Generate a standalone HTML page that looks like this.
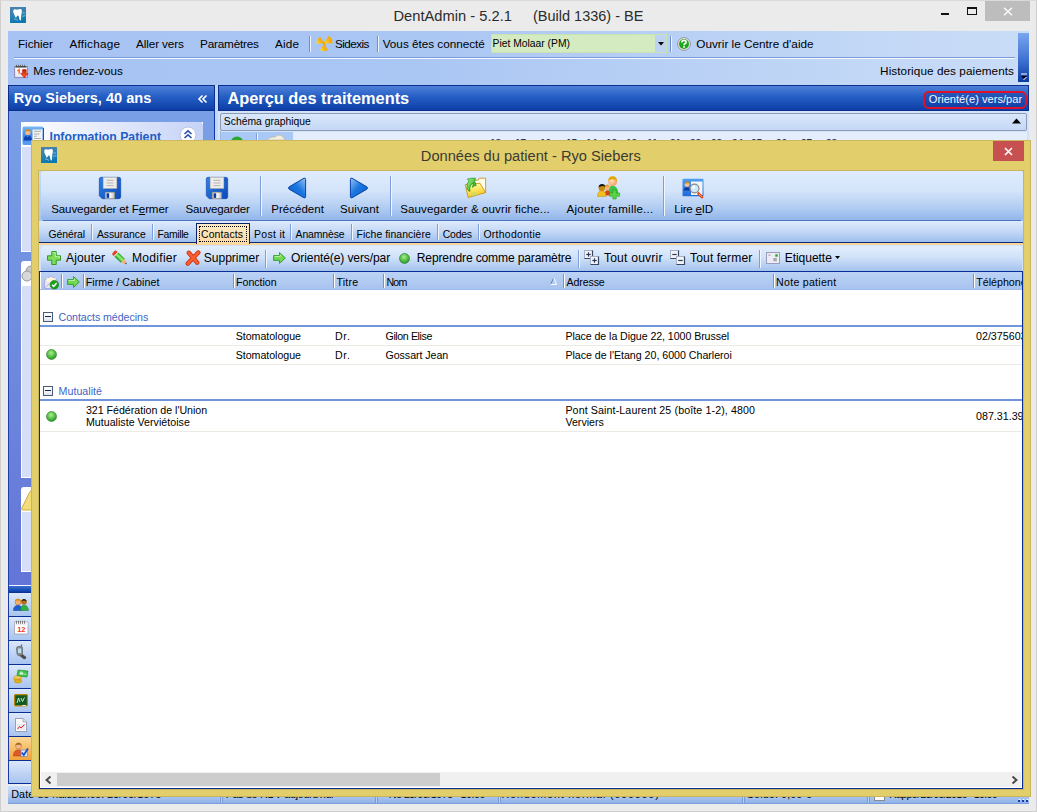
<!DOCTYPE html>
<html><head><meta charset="utf-8">
<style>
*{margin:0;padding:0;box-sizing:border-box}
html,body{width:1037px;height:812px;overflow:hidden}
body{background:#ebebeb;font-family:"Liberation Sans",sans-serif;font-size:12px;color:#000;position:relative}
.a{position:absolute}
.t{position:absolute;white-space:nowrap}
svg{position:absolute;overflow:visible}
</style></head><body>
<div class="a" style="left:0px;top:0px;width:1037px;height:812px;border:1px solid #cfcfcf;border-top-color:#dadada"></div>
<svg style="left:10px;top:7px" width="16" height="16" viewBox="0 0 16 16">
<defs><linearGradient id="tg10" x1="0" y1="0" x2="0.3" y2="1"><stop offset="0" stop-color="#5482ac"/><stop offset="0.6" stop-color="#2a82b4"/><stop offset="1" stop-color="#0c78b0"/></linearGradient></defs>
<rect width="16" height="16" fill="url(#tg10)"/>
<path d="M3.2 3.8 Q3.4 2 5 2.2 Q6.5 2.8 7.6 2.6 Q9 2 10.6 2.1 Q12.2 2.4 11.9 4.2 Q11.6 6.5 11.2 8.2 L11 12.6 Q10.8 13.8 10 13.4 Q9.2 12.4 9 10.2 Q8.8 8.6 7.8 8.6 Q7 8.7 6.6 9.8 Q6.1 11 5.6 10.6 Q5 9.2 4.5 8 Q3.1 6 3.2 3.8Z" fill="#fff"/>
<path d="M12.5 5.5 Q14 6.5 15 6 M12 9 Q13.5 9.5 15.5 8.5 M4 12 Q6 11.8 8 13.5" stroke="#a8d8f0" stroke-width="0.8" fill="none" opacity="0.8"/>
</svg>
<div class="t" style="left:393.50px;top:8.56px;font-size:14.7px;line-height:14.7px;color:#2b2b2b;font-weight:normal;">DentAdmin - 5.2.1</div>
<div class="t" style="left:533.00px;top:8.72px;font-size:14.51px;line-height:14.51px;color:#2b2b2b;font-weight:normal;">(Build 1336) - BE</div>
<div class="a" style="left:941px;top:13px;width:8px;height:2px;background:#111"></div>
<div class="a" style="left:967px;top:7px;width:10px;height:8px;border:1px solid #111;border-top-width:2px"></div>
<div class="a" style="left:985px;top:1px;width:45px;height:20px;background:#bdbdbd"></div>
<svg style="left:1003px;top:7px" width="10" height="9" viewBox="0 0 10 9"><path d="M1 0.8 L9 8.2 M9 0.8 L1 8.2" stroke="#fff" stroke-width="1.3"/></svg>
<div class="a" style="left:8px;top:31px;width:1021px;height:54px;background:linear-gradient(to right,#a6c3f3 0%,#aac6f3 40%,#c3d8f6 85%,#c9dcf7 100%)"></div>
<div class="a" style="left:14px;top:57px;width:1001px;height:1px;background:#7b9cd9"></div>
<div class="a" style="left:14px;top:58px;width:1001px;height:1px;background:#f4f8ff"></div>
<div class="t" style="left:18.00px;top:38.05px;font-size:11.75px;line-height:11.75px;color:#000;font-weight:normal;letter-spacing:-0.058px;">Fichier</div>
<div class="t" style="left:69.40px;top:38.05px;font-size:11.75px;line-height:11.75px;color:#000;font-weight:normal;letter-spacing:0.230px;">Affichage</div>
<div class="t" style="left:136.00px;top:38.05px;font-size:11.75px;line-height:11.75px;color:#000;font-weight:normal;letter-spacing:-0.111px;">Aller vers</div>
<div class="t" style="left:200.00px;top:38.05px;font-size:11.75px;line-height:11.75px;color:#000;font-weight:normal;letter-spacing:-0.194px;">Paramètres</div>
<div class="t" style="left:275.00px;top:38.05px;font-size:11.75px;line-height:11.75px;color:#000;font-weight:normal;letter-spacing:0.167px;">Aide</div>
<div class="a" style="left:309px;top:36px;width:1px;height:16px;background:#6f8fc8;box-shadow:1px 0 0 #eef4ff"></div>
<svg style="left:315px;top:35px" width="17" height="17" viewBox="0 0 17 17">
<defs><linearGradient id="rad" x1="0" y1="0" x2="0" y2="1"><stop offset="0" stop-color="#f7a400"/><stop offset="0.5" stop-color="#f9b818"/><stop offset="1" stop-color="#f8ec20"/></linearGradient></defs>
<g transform="rotate(60 9.3 8.3)">
<circle cx="9.3" cy="8.3" r="1.6" fill="#e8a000"/>
<path d="M9.3 8.3 L5 1.3 A8 8 0 0 1 13.6 1.3Z" fill="url(#rad)"/>
<path d="M9.3 8.3 L17 8.8 A8 8 0 0 1 13 15.4Z" fill="url(#rad)"/>
<path d="M9.3 8.3 L5.6 15.4 A8 8 0 0 1 1.6 8.8Z" fill="url(#rad)"/>
</g></svg>
<div class="t" style="left:335.00px;top:38.05px;font-size:11.75px;line-height:11.75px;color:#000;font-weight:normal;letter-spacing:-0.566px;">Sidexis</div>
<div class="a" style="left:377px;top:36px;width:1px;height:16px;background:#6f8fc8;box-shadow:1px 0 0 #eef4ff"></div>
<div class="t" style="left:382.70px;top:38.05px;font-size:11.75px;line-height:11.75px;color:#000;font-weight:normal;letter-spacing:-0.022px;">Vous êtes connecté</div>
<div class="a" style="left:491px;top:34px;width:176px;height:19px;background:#d4ebc1;border:1px solid #c9e2b5"></div>
<div class="a" style="left:655px;top:35px;width:11px;height:17px;background:#bdd3f2"></div>
<svg style="left:658px;top:42px" width="6" height="4" viewBox="0 0 6 4"><path d="M0 0 H6 L3 3.5Z" fill="#000"/></svg>
<div class="t" style="left:492.50px;top:38.76px;font-size:10.33px;line-height:10.33px;color:#000;font-weight:normal;">Piet Molaar (PM)</div>
<div class="a" style="left:670px;top:36px;width:1px;height:16px;background:#6f8fc8;box-shadow:1px 0 0 #eef4ff"></div>
<svg style="left:677px;top:37px" width="14" height="14" viewBox="0 0 14 14">
<circle cx="7" cy="7" r="6.4" fill="#f0e4f0" stroke="#8c8c8c" stroke-width="0.9"/>
<circle cx="7" cy="7" r="5" fill="#1aa81a"/>
<path d="M4.9 5.4 Q4.9 3.4 7 3.4 Q9.1 3.4 9.1 5.2 Q9.1 6.3 7.8 6.8 Q7 7.2 7 8.2" stroke="#fff" stroke-width="1.6" fill="none"/>
<rect x="6.1" y="9.2" width="1.9" height="1.5" fill="#fff"/>
</svg>
<div class="t" style="left:696.30px;top:38.05px;font-size:11.75px;line-height:11.75px;color:#000;font-weight:normal;letter-spacing:0.004px;">Ouvrir le Centre d'aide</div>
<svg style="left:14px;top:64px" width="15" height="15" viewBox="0 0 15 15">
<defs><linearGradient id="cal" x1="0" y1="0" x2="0" y2="1"><stop offset="0" stop-color="#ffffff"/><stop offset="1" stop-color="#e4e2f4"/></linearGradient>
<linearGradient id="car" x1="0" y1="0" x2="0" y2="1"><stop offset="0" stop-color="#c81800"/><stop offset="0.7" stop-color="#ff5010"/><stop offset="1" stop-color="#d82000"/></linearGradient></defs>
<rect x="0.6" y="2.6" width="12.8" height="11" fill="url(#cal)" stroke="#8a88b8" stroke-width="1"/>
<path d="M1.5 2.8 H12.5" stroke="#555" stroke-width="1.6"/>
<path d="M2.5 0.8 V3 M4.5 0.8 V3 M6.5 0.8 V3 M8.5 0.8 V3 M10.5 0.8 V3" stroke="#444" stroke-width="0.7"/>
<path d="M3.3 7 L5.2 5.6 V9.8" stroke="#ff6a10" stroke-width="1.4" fill="none"/>
<path d="M8.5 5.6 H12.2 V9.6 H14 L10.35 13.8 L6.7 9.6 H8.5Z" fill="url(#car)" stroke="#b01000" stroke-width="0.5"/>
</svg>
<div class="t" style="left:33.30px;top:65.05px;font-size:11.75px;line-height:11.75px;color:#000;font-weight:normal;letter-spacing:-0.044px;">Mes rendez-vous</div>
<div class="t" style="left:880.10px;top:65.05px;font-size:11.75px;line-height:11.75px;color:#000;font-weight:normal;letter-spacing:0.057px;">Historique des paiements</div>
<div class="a" style="left:1018px;top:33px;width:11px;height:49px;background:linear-gradient(#79a6ef,#3f72d2 55%,#0a3a9f)"></div>
<svg style="left:1020px;top:73px" width="8" height="8" viewBox="0 0 8 8"><path d="M1 1 H7" stroke="#fff" stroke-width="1"/><path d="M1 3 H7 L4 6Z" fill="#000"/><path d="M3.5 7 L6.5 4" stroke="#fff" stroke-width="1"/></svg>
<div class="a" style="left:8px;top:85px;width:207px;height:500px;background:linear-gradient(#7ba2e7,#6375d6)"></div>
<div class="a" style="left:8px;top:85px;width:1px;height:700px;background:#1e3fae"></div>
<div class="a" style="left:214px;top:85px;width:1px;height:501px;background:#0c35a8"></div>
<div class="a" style="left:8px;top:85px;width:207px;height:26px;background:linear-gradient(#4f80d9,#245ec4 45%,#0d3ea6 100%);border:1px solid #0b2f8c"></div>
<div class="t" style="left:13.70px;top:90.67px;font-size:14.57px;line-height:14.57px;color:#fff;font-weight:bold;">Ryo Siebers, 40 ans</div>
<svg style="left:198px;top:95px" width="9" height="8" viewBox="0 0 9 8"><path d="M4.5 0.5 L1 4 L4.5 7.5 M8.5 0.5 L5 4 L8.5 7.5" stroke="#fff" stroke-width="1.6" fill="none"/></svg>
<div class="a" style="left:21px;top:122px;width:182px;height:130px;background:#d6dff7;border:1px solid #fff;border-top:none"></div>
<div class="a" style="left:21px;top:122px;width:182px;height:25px;background:linear-gradient(to right,#fff,#c6d3f7);border-radius:4px 4px 0 0"></div>
<svg style="left:22px;top:126px" width="22" height="20" viewBox="0 0 22 20">
<defs><linearGradient id="ipc" x1="0" y1="0" x2="0" y2="1"><stop offset="0" stop-color="#7ab8f4"/><stop offset="0.5" stop-color="#3c8ae8"/><stop offset="1" stop-color="#5aa0f0"/></linearGradient></defs>
<rect x="0.5" y="0.5" width="21" height="18.5" rx="1.5" fill="url(#ipc)"/>
<path d="M21.5 2 V18" stroke="#1a50b8" stroke-width="1"/>
<rect x="10.5" y="3.5" width="10" height="10.5" fill="#f2f2f2"/>
<path d="M12 5.3 H19 M12 8 H17.5 M12 10.2 H15 M12 12.5 H19" stroke="#9a9a9a" stroke-width="0.8"/>
<circle cx="5.8" cy="6.5" r="2.6" fill="#f8b888"/>
<path d="M3 6.8 Q2.8 3.3 5.8 3.3 Q8.6 3.3 8.6 6 Q7 4.8 5.6 5 Q4 5 3 6.8Z" fill="#d88a10"/>
<path d="M1.5 14.5 Q1.8 9.6 5.8 9.6 Q9.8 9.6 10 14.5Z" fill="#0c3fb0"/>
<path d="M5.2 9.8 L5.8 11.5 L6.4 9.8Z" fill="#a8e0f8"/>
</svg>
<div class="t" style="left:49.50px;top:131.14px;font-size:12.24px;line-height:12.24px;color:#215dc6;font-weight:bold;">Information Patient</div>
<svg style="left:179px;top:126px" width="18" height="18" viewBox="0 0 18 18">
<circle cx="9" cy="9" r="8" fill="#fff" stroke="#b9c4dc"/>
<path d="M5.5 8 L9 4.8 L12.5 8 M5.5 12 L9 8.8 L12.5 12" stroke="#2a4fa8" stroke-width="1.6" fill="none"/>
</svg>
<div class="a" style="left:21px;top:261px;width:182px;height:25px;background:#fff;border-radius:3px 3px 0 0"></div>
<div class="a" style="left:21px;top:286px;width:182px;height:192px;background:#d6dff7;border:1px solid #fff;border-top:none"></div>
<svg style="left:22px;top:265px" width="14" height="18" viewBox="0 0 14 18"><ellipse cx="9" cy="6" rx="5" ry="5" fill="#c8c8c8" stroke="#999"/><ellipse cx="5" cy="11" rx="5" ry="5" fill="#d8d8d8" stroke="#999"/></svg>
<div class="a" style="left:21px;top:487px;width:182px;height:25px;background:#fff;border-radius:3px 3px 0 0"></div>
<div class="a" style="left:21px;top:512px;width:182px;height:60px;background:#d6dff7;border:1px solid #fff;border-top:none"></div>
<svg style="left:21px;top:490px" width="12" height="21" viewBox="0 0 12 21"><path d="M11 1.5 Q10 0 9 1.5 L0.8 18 Q0.3 20 2 20 H12 V1Z" fill="#f3dc7a" stroke="#c8a830" stroke-width="0.9"/></svg>
<div class="a" style="left:8px;top:585px;width:23px;height:1px;background:#f4f6ff"></div>
<div class="a" style="left:8px;top:586px;width:23px;height:7px;background:linear-gradient(#3a70d0,#1248b0 70%,#0a2f94)"></div>
<div class="a" style="left:8px;top:585px;width:1px;height:8px;background:#1a3aa8"></div>
<div class="a" style="left:8px;top:593px;width:23px;height:24px;background:linear-gradient(#dce8fb,#a8c4ef);border-left:1px solid #1a3aa8;border-bottom:1px solid #0a2f94"></div>
<div class="a" style="left:8px;top:617px;width:23px;height:24px;background:linear-gradient(#dce8fb,#a8c4ef);border-left:1px solid #1a3aa8;border-bottom:1px solid #0a2f94"></div>
<div class="a" style="left:8px;top:641px;width:23px;height:24px;background:linear-gradient(#dce8fb,#a8c4ef);border-left:1px solid #1a3aa8;border-bottom:1px solid #0a2f94"></div>
<div class="a" style="left:8px;top:665px;width:23px;height:24px;background:linear-gradient(#dce8fb,#a8c4ef);border-left:1px solid #1a3aa8;border-bottom:1px solid #0a2f94"></div>
<div class="a" style="left:8px;top:689px;width:23px;height:24px;background:linear-gradient(#dce8fb,#a8c4ef);border-left:1px solid #1a3aa8;border-bottom:1px solid #0a2f94"></div>
<div class="a" style="left:8px;top:713px;width:23px;height:24px;background:linear-gradient(#dce8fb,#a8c4ef);border-left:1px solid #1a3aa8;border-bottom:1px solid #0a2f94"></div>
<div class="a" style="left:8px;top:737px;width:23px;height:24px;background:linear-gradient(#fcd994,#f3a23a);border-left:1px solid #1a3aa8;border-bottom:1px solid #0a2f94"></div>
<div class="a" style="left:8px;top:761px;width:23px;height:23px;background:linear-gradient(#dce8fb,#a8c4ef);border-left:1px solid #1a3aa8;border-bottom:1px solid #0a2f94"></div>
<svg style="left:13px;top:598px" width="16" height="13" viewBox="0 0 16 13"><circle cx="5" cy="4" r="3" fill="#f4b070" stroke="#b07020" stroke-width="0.5"/>
<path d="M2.2 3.5 Q2.5 0.8 5 0.8 Q7.5 0.8 7.8 3.5 Q6 2.5 5 2.6 Q3.5 2.5 2.2 3.5Z" fill="#d89010"/>
<path d="M0.5 12.5 Q0.5 7.5 5 7.3 Q9 7.5 9 12.5Z" fill="#1f5fd0" stroke="#0a3a98" stroke-width="0.5"/>
<circle cx="11" cy="4" r="2.8" fill="#b07020"/>
<path d="M8.3 3.5 Q8.5 1 11 1 Q13.5 1 13.7 3.5 Q12 2.4 11 2.6 Q9.5 2.5 8.3 3.5Z" fill="#111"/>
<path d="M7.5 12.5 Q7.5 7.3 11 7.2 Q15 7.3 15.5 12.5Z" fill="#2fb040" stroke="#14802a" stroke-width="0.5"/></svg>
<svg style="left:14px;top:620px" width="15" height="15" viewBox="0 0 15 15"><rect x="0.5" y="2" width="13.5" height="12" fill="#fff" stroke="#a0a0b0" stroke-width="0.8"/>
<rect x="0.8" y="2.3" width="13" height="3" fill="#ececf4"/>
<path d="M2.5 0.8 v3 M4.5 0.8 v3 M6.5 0.8 v3 M8.5 0.8 v3 M10.5 0.8 v3" stroke="#555" stroke-width="0.7"/>
<text x="7.3" y="12" font-family="Liberation Sans" font-size="7.5" font-weight="bold" fill="#e83a10" text-anchor="middle">12</text></svg>
<svg style="left:15px;top:644px" width="12" height="16" viewBox="0 0 12 16"><path d="M4 11 L5.5 9 L11 13.2 Q11.3 14 10.3 14.6 L9 15 Z" fill="#4a4a4a" stroke="#2a2a2a" stroke-width="0.5"/>
<path d="M1.5 4.5 Q1.5 2.5 3.5 2.5 H6 Q7.5 2.5 7.5 4 V10 Q7.5 11.5 6 11.5 L4.5 11.8 Q2.5 12 2 10Z" fill="#8a8a8a" stroke="#555" stroke-width="0.6"/>
<rect x="3" y="4.5" width="3.2" height="4.5" fill="#b8e0f0"/>
<path d="M6.3 2.6 L6.6 0.5" stroke="#666" stroke-width="1.2"/></svg>
<svg style="left:13px;top:669px" width="16" height="14" viewBox="0 0 16 14"><path d="M5 1 L15 2 L14 8 L4 7Z" fill="#3cc048" stroke="#1a8a2a" stroke-width="0.6"/>
<path d="M6 4.5 L13.5 5.3" stroke="#c8f8c0" stroke-width="0.8"/>
<rect x="7" y="2.6" width="3" height="3" fill="#fff" opacity="0.6"/>
<ellipse cx="4.5" cy="10" rx="3.8" ry="1.6" fill="#f0c030" stroke="#b08010" stroke-width="0.5"/>
<ellipse cx="4.5" cy="8.5" rx="3.8" ry="1.6" fill="#f6d050" stroke="#b08010" stroke-width="0.5"/>
<ellipse cx="5" cy="12.3" rx="3.8" ry="1.6" fill="#e8b020" stroke="#b08010" stroke-width="0.5"/></svg>
<svg style="left:14px;top:694px" width="14" height="13" viewBox="0 0 14 13"><rect x="0.6" y="0.6" width="12.8" height="11.2" rx="1" fill="#0f5a1e" stroke="#b8860b" stroke-width="1.2"/>
<path d="M3 9 L4.5 4 L6 8 M7 4 L8.5 7.5 L10.5 3.5" stroke="#fff" stroke-width="0.8" fill="none"/>
<path d="M8 12 Q10 10.5 12 12" stroke="#fff" stroke-width="0.9" fill="none"/></svg>
<svg style="left:15px;top:718px" width="12" height="14" viewBox="0 0 12 14"><path d="M0.5 0.5 H8 L11.5 4 V13.5 H0.5Z" fill="#fafafa" stroke="#8a8aa8" stroke-width="0.8"/>
<path d="M8 0.5 V4 H11.5" fill="#ddd" stroke="#8a8aa8" stroke-width="0.6"/>
<rect x="2" y="6" width="8" height="6" fill="#e8e8f0"/>
<path d="M2.5 11 L4.5 8.5 L6 10 L9.5 6.5" stroke="#e02020" stroke-width="1" fill="none"/></svg>
<svg style="left:13px;top:742px" width="15" height="15" viewBox="0 0 15 15"><circle cx="5.5" cy="4" r="3" fill="#f4b88a" stroke="#b07030" stroke-width="0.5"/>
<path d="M2.5 3.8 Q2.6 0.8 5.5 0.8 Q8.3 0.8 8.5 3.8 Q7 2.6 5.5 2.8 Q4 2.6 2.5 3.8Z" fill="#a86a20"/>
<path d="M0.5 14 Q0.3 8 5.5 7.8 Q10 8 10 14Z" fill="#e05a28" stroke="#a83410" stroke-width="0.5"/>
<rect x="8" y="8" width="6.5" height="6.5" fill="#dfe8f8" stroke="#5a7ab8" stroke-width="0.6"/>
<path d="M8.8 10.5 L10.8 13 L15 6.5" stroke="#1050d0" stroke-width="1.8" fill="none"/></svg>
<div class="a" style="left:215px;top:85px;width:3px;height:700px;background:#c4d9f7"></div>
<div class="a" style="left:218px;top:85px;width:811px;height:700px;background:#d3e3f9"></div>
<div class="a" style="left:218px;top:85px;width:811px;height:26px;background:linear-gradient(#4f80d9,#245ec4 45%,#0d3ea6 100%);border:1px solid #0b2f8c"></div>
<div class="t" style="left:227.40px;top:90.14px;font-size:16.37px;line-height:16.37px;color:#fff;font-weight:bold;">Aperçu des traitements</div>
<div class="a" style="left:923px;top:91px;width:104px;height:18px;border:2px solid #e0102a;border-radius:6px;background:rgba(20,60,160,0.35)"></div>
<div class="t" style="left:928.80px;top:93.57px;font-size:11.14px;line-height:11.14px;color:#f2f6ff;font-weight:normal;">Orienté(e) vers/par</div>
<div class="a" style="left:220px;top:113px;width:807px;height:18px;background:linear-gradient(#d9e7fb,#c3d7f5);border:1px solid #8e9bb2;border-radius:2px"></div>
<div class="t" style="left:223.80px;top:117.23px;font-size:10.36px;line-height:10.36px;color:#000;font-weight:normal;">Schéma graphique</div>
<svg style="left:1012px;top:118px" width="9" height="6" viewBox="0 0 9 6"><path d="M0 5.5 L4.5 0.5 L9 5.5Z" fill="#000"/></svg>
<div class="a" style="left:220px;top:132px;width:73px;height:8px;background:#a9c8f5"></div>
<div class="a" style="left:293px;top:132px;width:734px;height:8px;background:#e3edfb"></div>
<div class="a" style="left:220px;top:131px;width:1px;height:9px;background:#9fb8e0"></div>
<svg style="left:230px;top:136px" width="14" height="6" viewBox="0 0 14 6"><ellipse cx="7" cy="6" rx="6" ry="5.5" fill="#2aa82a"/></svg>
<div class="a" style="left:256px;top:133px;width:1px;height:7px;background:#7d9ed8;box-shadow:1px 0 0 #f2f7ff"></div>
<svg style="left:266px;top:134px" width="20" height="6" viewBox="0 0 20 6"><path d="M1 6 Q4 2.5 9 3 Q12 0 15 1.5 Q18 3 19 6Z" fill="#f2efe2" stroke="#b8b090" stroke-width="0.6"/></svg>
<div class="t" style="left:490.00px;top:138.84px;font-size:10px;line-height:10px;color:#2a3550;font-weight:bold;">18</div>
<div class="t" style="left:515.00px;top:138.84px;font-size:10px;line-height:10px;color:#2a3550;font-weight:bold;">17</div>
<div class="t" style="left:540.00px;top:138.84px;font-size:10px;line-height:10px;color:#2a3550;font-weight:bold;">16</div>
<div class="t" style="left:566.00px;top:138.84px;font-size:10px;line-height:10px;color:#2a3550;font-weight:bold;">15</div>
<div class="t" style="left:586.00px;top:138.84px;font-size:10px;line-height:10px;color:#2a3550;font-weight:bold;">14</div>
<div class="t" style="left:606.00px;top:138.84px;font-size:10px;line-height:10px;color:#2a3550;font-weight:bold;">13</div>
<div class="t" style="left:626.00px;top:138.84px;font-size:10px;line-height:10px;color:#2a3550;font-weight:bold;">12</div>
<div class="t" style="left:647.00px;top:138.84px;font-size:10px;line-height:10px;color:#2a3550;font-weight:bold;">11</div>
<div class="t" style="left:670.00px;top:138.84px;font-size:10px;line-height:10px;color:#2a3550;font-weight:bold;">21</div>
<div class="t" style="left:690.00px;top:138.84px;font-size:10px;line-height:10px;color:#2a3550;font-weight:bold;">22</div>
<div class="t" style="left:711.00px;top:138.84px;font-size:10px;line-height:10px;color:#2a3550;font-weight:bold;">23</div>
<div class="t" style="left:732.00px;top:138.84px;font-size:10px;line-height:10px;color:#2a3550;font-weight:bold;">24</div>
<div class="t" style="left:751.00px;top:138.84px;font-size:10px;line-height:10px;color:#2a3550;font-weight:bold;">25</div>
<div class="t" style="left:776.00px;top:138.84px;font-size:10px;line-height:10px;color:#2a3550;font-weight:bold;">26</div>
<div class="t" style="left:801.00px;top:138.84px;font-size:10px;line-height:10px;color:#2a3550;font-weight:bold;">27</div>
<div class="t" style="left:826.00px;top:138.84px;font-size:10px;line-height:10px;color:#2a3550;font-weight:bold;">28</div>
<div class="a" style="left:8px;top:784px;width:1021px;height:20px;background:#ebebeb"></div>
<div class="a" style="left:8px;top:785px;width:1021px;height:19px;background:linear-gradient(#cfe1f8,#b3cdf2 50%,#8fb2e8);border-top:1px solid #e9f1fd;border-bottom:1px solid #7aa0dc"></div>
<div class="a" style="left:220px;top:786px;width:3px;height:17px;border-left:1px solid #7a9bd6;border-right:1px solid #7a9bd6;background:#b9d1f4"></div>
<div class="a" style="left:375px;top:786px;width:3px;height:17px;border-left:1px solid #7a9bd6;border-right:1px solid #7a9bd6;background:#b9d1f4"></div>
<div class="a" style="left:498px;top:786px;width:3px;height:17px;border-left:1px solid #7a9bd6;border-right:1px solid #7a9bd6;background:#b9d1f4"></div>
<div class="a" style="left:742px;top:786px;width:3px;height:17px;border-left:1px solid #7a9bd6;border-right:1px solid #7a9bd6;background:#b9d1f4"></div>
<div class="a" style="left:867px;top:786px;width:3px;height:17px;border-left:1px solid #7a9bd6;border-right:1px solid #7a9bd6;background:#b9d1f4"></div>
<div class="t" style="left:11.30px;top:788.86px;font-size:10.8px;line-height:10.8px;color:#000;font-weight:normal;letter-spacing:0.024px;">Date de naissance: 23/05/1975</div>
<div class="t" style="left:225.70px;top:788.86px;font-size:10.8px;line-height:10.8px;color:#000;font-weight:normal;letter-spacing:-0.339px;">Pas de RDV aujourd'hui</div>
<div class="t" style="left:388.70px;top:788.86px;font-size:10.8px;line-height:10.8px;color:#000;font-weight:normal;letter-spacing:-0.533px;">Né 23/05/1975 - 10:00</div>
<div class="t" style="left:501.50px;top:788.86px;font-size:10.8px;line-height:10.8px;color:#000;font-weight:normal;letter-spacing:0.800px;">Rendement normal (600000)</div>
<div class="t" style="left:746.80px;top:788.86px;font-size:10.8px;line-height:10.8px;color:#000;font-weight:normal;letter-spacing:0.095px;">Solde: 0,00 €</div>
<div class="a" style="left:874px;top:790px;width:11px;height:11px;background:#fff;border:1px solid #8a8a8a"></div>
<div class="t" style="left:889.00px;top:788.86px;font-size:10.8px;line-height:10.8px;color:#000;font-weight:normal;letter-spacing:-0.800px;">Rappel 23/05/2016 - 10:00</div>
<svg style="left:1017px;top:797px" width="12" height="6" viewBox="0 0 12 6"><g fill="#1a3aa8"><rect x="1" y="3" width="2" height="2"/><rect x="5" y="3" width="2" height="2"/><rect x="9" y="3" width="2" height="2"/></g><g fill="#fff"><rect x="1.8" y="2" width="1.5" height="1"/><rect x="5.8" y="2" width="1.5" height="1"/><rect x="9.8" y="2" width="1.5" height="1"/></g></svg>
<div class="a" style="left:31px;top:140px;width:1000px;height:657px;background:#e2cf6c;border:1px solid #c8b45a;border-top-color:#cdb95e"></div>
<svg style="left:41px;top:147px" width="16" height="16" viewBox="0 0 16 16">
<defs><linearGradient id="tg41" x1="0" y1="0" x2="0.3" y2="1"><stop offset="0" stop-color="#5482ac"/><stop offset="0.6" stop-color="#2a82b4"/><stop offset="1" stop-color="#0c78b0"/></linearGradient></defs>
<rect width="16" height="16" fill="url(#tg41)"/>
<path d="M3.2 3.8 Q3.4 2 5 2.2 Q6.5 2.8 7.6 2.6 Q9 2 10.6 2.1 Q12.2 2.4 11.9 4.2 Q11.6 6.5 11.2 8.2 L11 12.6 Q10.8 13.8 10 13.4 Q9.2 12.4 9 10.2 Q8.8 8.6 7.8 8.6 Q7 8.7 6.6 9.8 Q6.1 11 5.6 10.6 Q5 9.2 4.5 8 Q3.1 6 3.2 3.8Z" fill="#fff"/>
<path d="M12.5 5.5 Q14 6.5 15 6 M12 9 Q13.5 9.5 15.5 8.5 M4 12 Q6 11.8 8 13.5" stroke="#a8d8f0" stroke-width="0.8" fill="none" opacity="0.8"/>
</svg>
<div class="t" style="left:420.80px;top:148.58px;font-size:14.67px;line-height:14.67px;color:#3b3a33;font-weight:normal;">Données du patient - Ryo Siebers</div>
<div class="a" style="left:993px;top:141px;width:31px;height:20px;background:#c75050"></div>
<svg style="left:1004px;top:147px" width="9" height="9" viewBox="0 0 9 9"><path d="M1 1 L8 8 M8 1 L1 8" stroke="#fff" stroke-width="1.6"/></svg>
<div class="a" style="left:38px;top:170px;width:986px;height:620px;background:#a9c6f3;border:1px solid #c9b55e"></div>
<div class="a" style="left:39px;top:171px;width:984px;height:50px;background:linear-gradient(#c8dbf8,#a9c6f3)"></div>
<div class="a" style="left:41px;top:171px;width:982px;height:50px;background:linear-gradient(#e0ecfc 0%,#d3e4fa 40%,#b0cbf2 75%,#8fb4ea 100%);border-radius:3px 3px 4px 4px"></div>
<div class="a" style="left:43px;top:220px;width:978px;height:1px;background:#4d74c0"></div>
<div class="a" style="left:39px;top:221px;width:984px;height:21px;background:linear-gradient(#dfeafb,#c3d8f6 50%,#9ebfee)"></div>
<div class="a" style="left:39px;top:242px;width:984px;height:1px;background:#0a2a7a"></div>
<div class="a" style="left:39px;top:243px;width:984px;height:2px;background:#fbd49a"></div>
<div class="a" style="left:39px;top:245px;width:984px;height:26px;background:#d2e2f9"></div>
<div class="a" style="left:41px;top:246px;width:981px;height:25px;background:linear-gradient(#e3eefc,#d0e2f9 45%,#a5c2ed);border-radius:4px 4px 0 0"></div>
<div class="a" style="left:39px;top:271px;width:984px;height:518px;background:#fff;border:1px solid #0a2f94"></div>
<div class="a" style="left:40px;top:272px;width:982px;height:18px;background:linear-gradient(#bcd3f5,#afc9f1 60%,#a6c2ee);border-left:1px solid #fff"></div>
<div class="a" style="left:40px;top:289px;width:982px;height:1px;background:#9fbdec"></div>
<div class="a" style="left:41px;top:772px;width:980px;height:15px;background:#f0f0f0"></div>
<div class="a" style="left:57px;top:773px;width:383px;height:13px;background:#cdcdcd"></div>
<svg style="left:45px;top:776px" width="7" height="8" viewBox="0 0 7 8"><path d="M5.5 0.6 L1.6 4 L5.5 7.4" stroke="#4a4a4a" stroke-width="2" fill="none"/></svg>
<svg style="left:1011px;top:776px" width="7" height="8" viewBox="0 0 7 8"><path d="M1.5 0.6 L5.4 4 L1.5 7.4" stroke="#4a4a4a" stroke-width="2" fill="none"/></svg>
<div class="t" style="left:51.20px;top:203.72px;font-size:11.55px;line-height:11.55px;color:#000;font-weight:normal;letter-spacing:-0.101px;">Sauvegarder et F<u>e</u>rmer</div>
<div class="t" style="left:185.50px;top:203.72px;font-size:11.55px;line-height:11.55px;color:#000;font-weight:normal;letter-spacing:-0.182px;">Sauvegarder</div>
<div class="t" style="left:271.30px;top:203.72px;font-size:11.55px;line-height:11.55px;color:#000;font-weight:normal;letter-spacing:-0.009px;">Précédent</div>
<div class="t" style="left:340.00px;top:203.72px;font-size:11.55px;line-height:11.55px;color:#000;font-weight:normal;letter-spacing:0.063px;">Suivant</div>
<div class="t" style="left:400.20px;top:203.72px;font-size:11.55px;line-height:11.55px;color:#000;font-weight:normal;letter-spacing:0.114px;">Sauvegarder &amp; ouvrir fiche...</div>
<div class="t" style="left:566.60px;top:203.72px;font-size:11.55px;line-height:11.55px;color:#000;font-weight:normal;letter-spacing:0.223px;">Ajouter famille...</div>
<div class="t" style="left:674.20px;top:203.72px;font-size:11.55px;line-height:11.55px;color:#000;font-weight:normal;letter-spacing:-0.232px;">Lire <u>e</u>ID</div>
<div class="a" style="left:260px;top:176px;width:1px;height:40px;background:#7d9ed8;box-shadow:1px 0 0 #f2f7ff"></div>
<div class="a" style="left:390px;top:176px;width:1px;height:40px;background:#7d9ed8;box-shadow:1px 0 0 #f2f7ff"></div>
<div class="a" style="left:663px;top:176px;width:1px;height:40px;background:#7d9ed8;box-shadow:1px 0 0 #f2f7ff"></div>
<div class="a" style="left:91px;top:224px;width:1px;height:16px;background:#7d9ed8;box-shadow:1px 0 0 #f2f7ff"></div>
<div class="a" style="left:152px;top:224px;width:1px;height:16px;background:#7d9ed8;box-shadow:1px 0 0 #f2f7ff"></div>
<div class="a" style="left:290px;top:224px;width:1px;height:16px;background:#7d9ed8;box-shadow:1px 0 0 #f2f7ff"></div>
<div class="a" style="left:351px;top:224px;width:1px;height:16px;background:#7d9ed8;box-shadow:1px 0 0 #f2f7ff"></div>
<div class="a" style="left:437px;top:224px;width:1px;height:16px;background:#7d9ed8;box-shadow:1px 0 0 #f2f7ff"></div>
<div class="a" style="left:478px;top:224px;width:1px;height:16px;background:#7d9ed8;box-shadow:1px 0 0 #f2f7ff"></div>
<div class="a" style="left:196px;top:223px;width:54px;height:21px;background:linear-gradient(#fdebc8,#fbd9a2);border:1px solid #0a246a;border-bottom:none"></div>
<div class="a" style="left:199px;top:226px;width:48px;height:16px;border:1px dotted #000"></div>
<div class="t" style="left:48.50px;top:230.15px;font-size:10.45px;line-height:10.45px;color:#000;font-weight:normal;letter-spacing:-0.100px;">Général</div>
<div class="t" style="left:96.90px;top:230.15px;font-size:10.45px;line-height:10.45px;color:#000;font-weight:normal;letter-spacing:-0.060px;">Assurance</div>
<div class="t" style="left:157.60px;top:230.15px;font-size:10.45px;line-height:10.45px;color:#000;font-weight:normal;letter-spacing:-0.384px;">Famille</div>
<div class="t" style="left:201.00px;top:230.15px;font-size:10.45px;line-height:10.45px;color:#000;font-weight:normal;letter-spacing:0.111px;">Contacts</div>
<div class="t" style="left:254.00px;top:230.15px;font-size:10.45px;line-height:10.45px;color:#000;font-weight:normal;letter-spacing:0.325px;">Post it</div>
<div class="t" style="left:295.60px;top:230.15px;font-size:10.45px;line-height:10.45px;color:#000;font-weight:normal;letter-spacing:-0.122px;">Anamnèse</div>
<div class="t" style="left:356.60px;top:230.15px;font-size:10.45px;line-height:10.45px;color:#000;font-weight:normal;letter-spacing:0.028px;">Fiche financière</div>
<div class="t" style="left:442.80px;top:230.15px;font-size:10.45px;line-height:10.45px;color:#000;font-weight:normal;letter-spacing:-0.250px;">Codes</div>
<div class="t" style="left:483.40px;top:230.15px;font-size:10.45px;line-height:10.45px;color:#000;font-weight:normal;letter-spacing:0.290px;">Orthodontie</div>
<div class="t" style="left:66.00px;top:252.06px;font-size:12.1px;line-height:12.1px;color:#000;font-weight:normal;letter-spacing:0.124px;">Ajouter</div>
<div class="t" style="left:132.00px;top:252.06px;font-size:12.1px;line-height:12.1px;color:#000;font-weight:normal;letter-spacing:0.269px;">Modifier</div>
<div class="t" style="left:203.80px;top:252.06px;font-size:12.1px;line-height:12.1px;color:#000;font-weight:normal;letter-spacing:-0.043px;">Supprimer</div>
<div class="t" style="left:291.10px;top:252.06px;font-size:12.1px;line-height:12.1px;color:#000;font-weight:normal;letter-spacing:-0.134px;">Orienté(e) vers/par</div>
<div class="t" style="left:416.80px;top:252.06px;font-size:12.1px;line-height:12.1px;color:#000;font-weight:normal;letter-spacing:-0.166px;">Reprendre comme paramètre</div>
<div class="t" style="left:603.90px;top:252.06px;font-size:12.1px;line-height:12.1px;color:#000;font-weight:normal;letter-spacing:0.219px;">Tout ouvrir</div>
<div class="t" style="left:690.10px;top:252.06px;font-size:12.1px;line-height:12.1px;color:#000;font-weight:normal;letter-spacing:0.103px;">Tout fermer</div>
<div class="t" style="left:784.70px;top:252.06px;font-size:12.1px;line-height:12.1px;color:#000;font-weight:normal;letter-spacing:-0.067px;">Etiquette</div>
<div class="a" style="left:265px;top:250px;width:1px;height:18px;background:#7d9ed8;box-shadow:1px 0 0 #f2f7ff"></div>
<div class="a" style="left:578px;top:250px;width:1px;height:18px;background:#7d9ed8;box-shadow:1px 0 0 #f2f7ff"></div>
<div class="a" style="left:759px;top:250px;width:1px;height:18px;background:#7d9ed8;box-shadow:1px 0 0 #f2f7ff"></div>
<div class="t" style="left:85.70px;top:277.28px;font-size:10.65px;line-height:10.65px;color:#000;font-weight:normal;letter-spacing:0.072px;">Firme / Cabinet</div>
<div class="t" style="left:236.10px;top:277.28px;font-size:10.65px;line-height:10.65px;color:#000;font-weight:normal;letter-spacing:-0.049px;">Fonction</div>
<div class="t" style="left:336.40px;top:277.28px;font-size:10.65px;line-height:10.65px;color:#000;font-weight:normal;letter-spacing:0.193px;">Titre</div>
<div class="t" style="left:386.40px;top:277.28px;font-size:10.65px;line-height:10.65px;color:#000;font-weight:normal;letter-spacing:-0.800px;">Nom</div>
<div class="t" style="left:566.60px;top:277.28px;font-size:10.65px;line-height:10.65px;color:#000;font-weight:normal;letter-spacing:-0.148px;">Adresse</div>
<div class="t" style="left:776.10px;top:277.28px;font-size:10.65px;line-height:10.65px;color:#000;font-weight:normal;letter-spacing:0.249px;">Note patient</div>
<div class="a" style="left:975px;top:272px;width:47px;height:17px;overflow:hidden">
<div class="t" style="left:1.20px;top:5.24px;font-size:10.7px;line-height:10.7px;color:#000;font-weight:normal;">Téléphone</div>
</div>
<div class="a" style="left:61px;top:274px;width:1px;height:14px;background:#7093d6;box-shadow:1px 0 0 #ffffff"></div>
<div class="a" style="left:83px;top:274px;width:1px;height:14px;background:#7093d6;box-shadow:1px 0 0 #ffffff"></div>
<div class="a" style="left:233px;top:274px;width:1px;height:14px;background:#7093d6;box-shadow:1px 0 0 #ffffff"></div>
<div class="a" style="left:333px;top:274px;width:1px;height:14px;background:#7093d6;box-shadow:1px 0 0 #ffffff"></div>
<div class="a" style="left:383px;top:274px;width:1px;height:14px;background:#7093d6;box-shadow:1px 0 0 #ffffff"></div>
<div class="a" style="left:563px;top:274px;width:1px;height:14px;background:#7093d6;box-shadow:1px 0 0 #ffffff"></div>
<div class="a" style="left:773px;top:274px;width:1px;height:14px;background:#7093d6;box-shadow:1px 0 0 #ffffff"></div>
<div class="a" style="left:973px;top:274px;width:1px;height:14px;background:#7093d6;box-shadow:1px 0 0 #ffffff"></div>
<svg style="left:550px;top:277px" width="7" height="8" viewBox="0 0 7 8"><path d="M3.7 0.8 L0.6 7.4" stroke="#5f80c8" stroke-width="1"/><path d="M3.7 0.8 L6.6 7.4 H0.6" stroke="#ffffff" stroke-width="1" fill="none"/></svg>
<div class="a" style="left:43px;top:312px;width:10px;height:10px;border:1px solid #4a5a7a;background:linear-gradient(#fff,#dfe5ef)"></div>
<div class="a" style="left:45px;top:316px;width:6px;height:1px;background:#1a2a50"></div>
<div class="t" style="left:58.60px;top:311.98px;font-size:10.65px;line-height:10.65px;color:#3d64c4;font-weight:normal;letter-spacing:-0.055px;">Contacts médecins</div>
<div class="a" style="left:40px;top:325px;width:982px;height:2px;background:#7195db"></div>
<div class="a" style="left:43px;top:386px;width:10px;height:10px;border:1px solid #4a5a7a;background:linear-gradient(#fff,#dfe5ef)"></div>
<div class="a" style="left:45px;top:390px;width:6px;height:1px;background:#1a2a50"></div>
<div class="t" style="left:58.60px;top:385.98px;font-size:10.65px;line-height:10.65px;color:#3d64c4;font-weight:normal;letter-spacing:0.020px;">Mutualité</div>
<div class="a" style="left:40px;top:399px;width:982px;height:2px;background:#7195db"></div>
<div class="a" style="left:40px;top:345px;width:982px;height:1px;background:#ebebe3"></div>
<div class="a" style="left:40px;top:364px;width:982px;height:1px;background:#ebebe3"></div>
<div class="a" style="left:40px;top:431px;width:982px;height:1px;background:#ebebe3"></div>
<div class="t" style="left:235.70px;top:330.98px;font-size:10.65px;line-height:10.65px;color:#000;font-weight:normal;letter-spacing:-0.028px;">Stomatologue</div>
<div class="t" style="left:334.90px;top:330.98px;font-size:10.65px;line-height:10.65px;color:#000;font-weight:normal;letter-spacing:0.734px;">Dr.</div>
<div class="t" style="left:385.50px;top:330.98px;font-size:10.65px;line-height:10.65px;color:#000;font-weight:normal;letter-spacing:-0.401px;">Gilon Elise</div>
<div class="t" style="left:565.40px;top:330.98px;font-size:10.65px;line-height:10.65px;color:#000;font-weight:normal;letter-spacing:-0.074px;">Place de la Digue 22, 1000 Brussel</div>
<div class="a" style="left:975px;top:328px;width:47px;height:17px;overflow:hidden">
<div class="t" style="left:1.00px;top:2.64px;font-size:10.7px;line-height:10.7px;color:#000;font-weight:normal;">02/375603</div>
</div>
<div class="t" style="left:235.70px;top:349.98px;font-size:10.65px;line-height:10.65px;color:#000;font-weight:normal;letter-spacing:-0.028px;">Stomatologue</div>
<div class="t" style="left:334.90px;top:349.98px;font-size:10.65px;line-height:10.65px;color:#000;font-weight:normal;letter-spacing:0.734px;">Dr.</div>
<div class="t" style="left:385.50px;top:349.98px;font-size:10.65px;line-height:10.65px;color:#000;font-weight:normal;letter-spacing:-0.047px;">Gossart Jean</div>
<div class="t" style="left:565.40px;top:349.98px;font-size:10.65px;line-height:10.65px;color:#000;font-weight:normal;letter-spacing:-0.018px;">Place de l'Etang 20, 6000 Charleroi</div>
<div class="t" style="left:85.90px;top:404.98px;font-size:10.65px;line-height:10.65px;color:#000;font-weight:normal;letter-spacing:-0.009px;">321 Fédération de l'Union</div>
<div class="t" style="left:85.90px;top:417.48px;font-size:10.65px;line-height:10.65px;color:#000;font-weight:normal;letter-spacing:0.020px;">Mutualiste Verviétoise</div>
<div class="t" style="left:565.40px;top:404.98px;font-size:10.65px;line-height:10.65px;color:#000;font-weight:normal;letter-spacing:0.118px;">Pont Saint-Laurent 25 (boîte 1-2), 4800</div>
<div class="t" style="left:565.40px;top:417.48px;font-size:10.65px;line-height:10.65px;color:#000;font-weight:normal;letter-spacing:0.014px;">Verviers</div>
<div class="a" style="left:975px;top:400px;width:47px;height:30px;overflow:hidden">
<div class="t" style="left:1.00px;top:10.94px;font-size:10.7px;line-height:10.7px;color:#000;font-weight:normal;">087.31.39.39</div>
</div>
<svg style="left:46px;top:349px" width="11" height="11" viewBox="0 0 11 11"><defs><radialGradient id="gd46349" cx="0.45" cy="0.35" r="0.65"><stop offset="0" stop-color="#a8f088"/><stop offset="1" stop-color="#1f9a1f"/></radialGradient></defs><circle cx="5.5" cy="5.5" r="5" fill="url(#gd46349)" stroke="#2a7a2a" stroke-width="0.6"/></svg>
<svg style="left:46px;top:411px" width="11" height="11" viewBox="0 0 11 11"><defs><radialGradient id="gd46411" cx="0.45" cy="0.35" r="0.65"><stop offset="0" stop-color="#a8f088"/><stop offset="1" stop-color="#1f9a1f"/></radialGradient></defs><circle cx="5.5" cy="5.5" r="5" fill="url(#gd46411)" stroke="#2a7a2a" stroke-width="0.6"/></svg>
<svg style="left:99px;top:177px" width="22" height="22" viewBox="0 0 22 22"><defs><linearGradient id="fla" x1="0" y1="0" x2="1" y2="1"><stop offset="0" stop-color="#2f7fe6"/><stop offset="1" stop-color="#0b4ab8"/></linearGradient>
<linearGradient id="fsa" x1="0" y1="0" x2="1" y2="0"><stop offset="0" stop-color="#d8d8d8"/><stop offset="0.5" stop-color="#ffffff"/><stop offset="1" stop-color="#bcbcbc"/></linearGradient></defs>
<path d="M2 0.3 H19.8 Q21.7 0.3 21.7 2.2 V19.8 Q21.7 21.7 19.8 21.7 H3.2 L0.3 18.8 V2.2 Q0.3 0.3 2 0.3Z" fill="url(#fla)" stroke="#0a3ea8" stroke-width="0.6"/>
<rect x="4.2" y="0.3" width="13.6" height="11" fill="#ececec" stroke="#c9bda5" stroke-width="0.6"/>
<path d="M7.5 3.3 H14.5 M7.5 6 H14.5 M7.5 8.6 H14.5" stroke="#b5b5b5" stroke-width="1"/>
<rect x="6.2" y="15.2" width="9.4" height="6.5" fill="url(#fsa)" stroke="#9c9070" stroke-width="0.6"/>
<rect x="7.6" y="16.3" width="2.6" height="4.6" fill="#0c3aa8"/>
<circle cx="19" cy="3" r="0.6" fill="#062a70"/></svg>
<svg style="left:206px;top:177px" width="22" height="22" viewBox="0 0 22 22"><defs><linearGradient id="flb" x1="0" y1="0" x2="1" y2="1"><stop offset="0" stop-color="#2f7fe6"/><stop offset="1" stop-color="#0b4ab8"/></linearGradient>
<linearGradient id="fsb" x1="0" y1="0" x2="1" y2="0"><stop offset="0" stop-color="#d8d8d8"/><stop offset="0.5" stop-color="#ffffff"/><stop offset="1" stop-color="#bcbcbc"/></linearGradient></defs>
<path d="M2 0.3 H19.8 Q21.7 0.3 21.7 2.2 V19.8 Q21.7 21.7 19.8 21.7 H3.2 L0.3 18.8 V2.2 Q0.3 0.3 2 0.3Z" fill="url(#flb)" stroke="#0a3ea8" stroke-width="0.6"/>
<rect x="4.2" y="0.3" width="13.6" height="11" fill="#ececec" stroke="#c9bda5" stroke-width="0.6"/>
<path d="M7.5 3.3 H14.5 M7.5 6 H14.5 M7.5 8.6 H14.5" stroke="#b5b5b5" stroke-width="1"/>
<rect x="6.2" y="15.2" width="9.4" height="6.5" fill="url(#fsb)" stroke="#9c9070" stroke-width="0.6"/>
<rect x="7.6" y="16.3" width="2.6" height="4.6" fill="#0c3aa8"/>
<circle cx="19" cy="3" r="0.6" fill="#062a70"/></svg>
<svg style="left:288px;top:177px" width="18" height="22" viewBox="0 0 18 22"><defs><linearGradient id="ala" x1="1" y1="0" x2="0" y2="1"><stop offset="0" stop-color="#9cc4f2"/><stop offset="0.45" stop-color="#1b78e0"/><stop offset="1" stop-color="#0a5ccc"/></linearGradient></defs>
<path d="M16 1.2 Q17.6 0.6 17.6 2.5 V19.5 Q17.6 21.4 16 20.8 L1.2 12.2 Q-0.2 11 1.2 9.8Z" fill="url(#ala)" stroke="#0a42a8" stroke-width="1"/></svg>
<svg style="left:350px;top:177px" width="18" height="22" viewBox="0 0 18 22"><defs><linearGradient id="ara" x1="0" y1="0" x2="1" y2="1"><stop offset="0" stop-color="#9cc4f2"/><stop offset="0.45" stop-color="#1b78e0"/><stop offset="1" stop-color="#0a5ccc"/></linearGradient></defs>
<path d="M2 1.2 Q0.4 0.6 0.4 2.5 V19.5 Q0.4 21.4 2 20.8 L16.8 12.2 Q18.2 11 16.8 9.8Z" fill="url(#ara)" stroke="#0a42a8" stroke-width="1"/></svg>
<svg style="left:464px;top:177px" width="23" height="22" viewBox="0 0 23 22"><defs><linearGradient id="fd" x1="0" y1="0" x2="0.3" y2="1"><stop offset="0" stop-color="#fffbd0"/><stop offset="0.35" stop-color="#fff080"/><stop offset="1" stop-color="#f6c81a"/></linearGradient>
<linearGradient id="ga" x1="0" y1="0" x2="1" y2="1"><stop offset="0" stop-color="#a8f880"/><stop offset="1" stop-color="#0a9a10"/></linearGradient></defs>
<path d="M9.5 3.2 H14.2 L15.2 1.2 H21.6 V15.6 L9.5 17Z" fill="#fffde6" stroke="#d09420" stroke-width="0.9"/>
<path d="M1.2 7.6 L16 6.2 L21.6 15.6 L4.2 20.6 Z" fill="url(#fd)" stroke="#d09420" stroke-width="0.9"/>
<path d="M6 14.5 Q5 11 7 7.6 L9.8 5.4 L8.3 10.5 Q10 8.5 12.2 8.5 L10.8 4.2 L11.4 1.2 Q7 0.8 3.2 2.2 L5.2 3.6 Q2.2 6.8 3 11.5 Q3.6 13.6 6 14.5Z" fill="url(#ga)" stroke="#0c8a14" stroke-width="0.6"/>
<path d="M6.8 16.5 L11.5 15 L13.8 17.8 L8 19Z" fill="#b8e070" opacity="0.7"/></svg>
<svg style="left:597px;top:176px" width="24" height="23" viewBox="0 0 24 23"><defs><radialGradient id="fc" cx="0.4" cy="0.4" r="0.6"><stop offset="0" stop-color="#ffe0c0"/><stop offset="1" stop-color="#f4a060"/></radialGradient></defs>
<path d="M10.8 19 Q10.8 10 15.6 9.5 Q20.8 10 21.2 17 Z" fill="#3cc048"/>
<circle cx="15.6" cy="5.6" r="4.5" fill="url(#fc)"/>
<path d="M11.1 5 Q11.3 0.3 15.6 0.3 Q19.9 0.3 20.1 5 Q18 3 15.6 3.3 Q13 3 11.1 5Z" fill="#e0a800"/>
<path d="M7.5 19.5 Q7.5 14.5 10.2 14 Q13 14.5 13 19.5Z" fill="#d84018"/>
<circle cx="10" cy="11.8" r="2.6" fill="#f7b27a"/><path d="M7.5 11.5 Q7.8 8.6 10.2 8.6 Q12.6 8.6 12.8 11.2 Q11 10 10 10.2 Q8.6 10.2 7.5 11.5Z" fill="#d8a010"/>
<path d="M0.5 20.5 Q0.5 15 4.8 14.6 Q9 15 9 20.5Z" fill="#f0c020" stroke="#c89000" stroke-width="0.5"/>
<circle cx="4.8" cy="12" r="3.2" fill="#c88a10"/>
<path d="M1.5 11.5 Q1.8 8 5 8 Q8.2 8 8.2 11 Q6 9.6 4.5 10.2 Q2.5 10.5 1.5 11.5Z" fill="#151515"/>
<path d="M15.8 14 H19.2 V17 H22.6 V20.2 H19.2 V23 H15.8 V20.2 H12.6 V17 H15.8Z" fill="#5ad440" stroke="#22a022" stroke-width="0.6"/></svg>
<svg style="left:682px;top:178px" width="23" height="21" viewBox="0 0 23 21"><defs><linearGradient id="ec" x1="0" y1="0" x2="0" y2="1"><stop offset="0" stop-color="#4f9ff0"/><stop offset="1" stop-color="#1f6ad8"/></linearGradient></defs>
<rect x="0.5" y="0.8" width="21" height="17.5" rx="1" fill="url(#ec)"/>
<rect x="9" y="3.5" width="11.5" height="13.5" fill="#f4f4f4"/>
<circle cx="5" cy="6.5" r="2.4" fill="#f7c090"/>
<path d="M2.6 6 Q2.8 3.5 5 3.6 Q7.2 3.5 7.4 5.5 Q5.5 4.8 2.6 6Z" fill="#d08a10"/>
<path d="M1.5 12.5 Q2 9.3 5 9.3 Q8 9.3 8 12.5Z" fill="#0a3aa0"/>
<path d="M16.5 15.5 L20 19.2" stroke="#e84818" stroke-width="2.6" stroke-linecap="round"/>
<path d="M17 16 L18.2 17.2 M18.6 17.6 L19.6 18.6" stroke="#ffd060" stroke-width="1"/>
<circle cx="12.5" cy="10.5" r="4.4" fill="#cde9fb" stroke="#8a8a8a" stroke-width="1.2"/>
<circle cx="11.5" cy="9.3" r="1.5" fill="#ffffff" opacity="0.8"/></svg>
<svg style="left:47px;top:251px" width="14" height="14" viewBox="0 0 14 14"><path d="M4.8 0.5 H9.2 V4.8 H13.5 V9.2 H9.2 V13.5 H4.8 V9.2 H0.5 V4.8 H4.8Z" fill="#7edc5a" stroke="#2f9a25" stroke-width="1"/>
<path d="M5.6 1.5 H8.4 V5.6 H12.5 V7" stroke="#c8f8b0" stroke-width="0.8" fill="none"/></svg>
<svg style="left:110px;top:249px" width="20" height="18" viewBox="0 0 20 18"><defs><linearGradient id="pb" x1="0" y1="0" x2="0" y2="1"><stop offset="0" stop-color="#2a9a20"/><stop offset="0.45" stop-color="#98f878"/><stop offset="1" stop-color="#18901a"/></linearGradient></defs>
<g transform="translate(10.2 9.2) rotate(43)">
<path d="M-6 -2.8 H-8 Q-9.2 -2.8 -9.2 0 Q-9.2 2.8 -8 2.8 H-6Z" fill="#e8401c"/>
<rect x="-6.2" y="-2.8" width="1" height="5.6" fill="#e8e0e0"/>
<rect x="-5.3" y="-2.8" width="9" height="5.6" fill="url(#pb)"/>
<path d="M3.7 -2.8 L7.6 -0.9 V0.9 L3.7 2.8Z" fill="#f8b078"/>
<path d="M7.2 -1.1 L9 0 L7.2 1.1Z" fill="#505050"/>
</g></svg>
<svg style="left:183px;top:249px" width="18" height="18" viewBox="0 0 18 18"><path d="M5.8 3.8 L14.2 13.6 M15.3 3.6 L4.8 14.6" stroke="#c42a10" stroke-width="4.4" stroke-linecap="round"/>
<path d="M5.8 3.8 L14.2 13.6 M15.3 3.6 L4.8 14.6" stroke="#f65e2c" stroke-width="2.9" stroke-linecap="round"/></svg>
<svg style="left:273px;top:252px" width="13" height="12" viewBox="0 0 13 12"><path d="M0.6 3.6 H6.5 V0.6 L12.4 6 L6.5 11.4 V8.4 H0.6Z" fill="#72d852" stroke="#2a9a2a" stroke-width="0.9"/>
<path d="M1.5 4.5 H7.3 V2.5" stroke="#c8f8b0" stroke-width="0.8" fill="none"/></svg>
<svg style="left:399px;top:253px" width="11" height="11" viewBox="0 0 11 11"><defs><radialGradient id="gd399253" cx="0.45" cy="0.35" r="0.65"><stop offset="0" stop-color="#a8f088"/><stop offset="1" stop-color="#1f9a1f"/></radialGradient></defs><circle cx="5.5" cy="5.5" r="5" fill="url(#gd399253)" stroke="#2a7a2a" stroke-width="0.6"/></svg>
<svg style="left:584px;top:250px" width="9" height="9" viewBox="0 0 9 9"><rect x="0.5" y="0.5" width="8" height="8" fill="#f2f2fb" stroke="#a8b0c8" stroke-width="1"/><path d="M8.5 0.5 V8.5 H0.5" stroke="#3a4860" stroke-width="1.2" fill="none"/><path d="M2.3 4.5 H6.7" stroke="#2c3c54" stroke-width="1.2"/><path d="M4.5 2.3 V6.7" stroke="#2c3c54" stroke-width="1.2"/></svg>
<svg style="left:590px;top:256px" width="9" height="9" viewBox="0 0 9 9"><rect x="0.5" y="0.5" width="8" height="8" fill="#f2f2fb" stroke="#a8b0c8" stroke-width="1"/><path d="M8.5 0.5 V8.5 H0.5" stroke="#3a4860" stroke-width="1.2" fill="none"/><path d="M2.3 4.5 H6.7" stroke="#2c3c54" stroke-width="1.2"/><path d="M4.5 2.3 V6.7" stroke="#2c3c54" stroke-width="1.2"/></svg>
<svg style="left:670px;top:250px" width="9" height="9" viewBox="0 0 9 9"><rect x="0.5" y="0.5" width="8" height="8" fill="#f2f2fb" stroke="#a8b0c8" stroke-width="1"/><path d="M8.5 0.5 V8.5 H0.5" stroke="#3a4860" stroke-width="1.2" fill="none"/><path d="M2.3 4.5 H6.7" stroke="#2c3c54" stroke-width="1.2"/></svg>
<svg style="left:676px;top:256px" width="9" height="9" viewBox="0 0 9 9"><rect x="0.5" y="0.5" width="8" height="8" fill="#f2f2fb" stroke="#a8b0c8" stroke-width="1"/><path d="M8.5 0.5 V8.5 H0.5" stroke="#3a4860" stroke-width="1.2" fill="none"/><path d="M2.3 4.5 H6.7" stroke="#2c3c54" stroke-width="1.2"/></svg>
<svg style="left:766px;top:252px" width="14" height="12" viewBox="0 0 14 12"><rect x="0.5" y="0.5" width="13" height="11" fill="#edecf6" stroke="#9c9cb8" stroke-width="1"/>
<rect x="9.3" y="2.3" width="2.4" height="2.4" fill="#10b020"/>
<rect x="7.3" y="6" width="3.5" height="3.2" fill="#a8a8a8"/>
<rect x="2.3" y="2.6" width="2.4" height="1.2" fill="#b0b0b0"/></svg>
<svg style="left:835px;top:256px" width="5" height="3" viewBox="0 0 5 3"><path d="M0 0 H5 L2.5 3Z" fill="#000"/></svg>
<svg style="left:44px;top:275px" width="15" height="14" viewBox="0 0 15 14"><path d="M0.5 5.5 L7 0.7 L13.5 5.5 V13.5 H0.5Z" fill="#e8e4f6" stroke="#a8a0d0" stroke-width="0.8"/>
<rect x="2.5" y="3" width="9" height="4" fill="#fff6d8"/>
<path d="M0.8 13 L5.5 8.5" stroke="#a8a0d0" stroke-width="0.7"/>
<circle cx="10.3" cy="9.7" r="4.3" fill="#19a019" stroke="#0c7a0c" stroke-width="0.6"/>
<path d="M8 9.8 L9.7 11.5 L12.6 8" stroke="#fff" stroke-width="1.4" fill="none"/></svg>
<svg style="left:67px;top:276px" width="13" height="12" viewBox="0 0 13 12"><path d="M0.6 3.6 H6.5 V0.6 L12.4 6 L6.5 11.4 V8.4 H0.6Z" fill="#72d852" stroke="#2a9a2a" stroke-width="0.9"/>
<path d="M1.5 4.5 H7.3 V2.5" stroke="#c8f8b0" stroke-width="0.8" fill="none"/></svg>
</body></html>
